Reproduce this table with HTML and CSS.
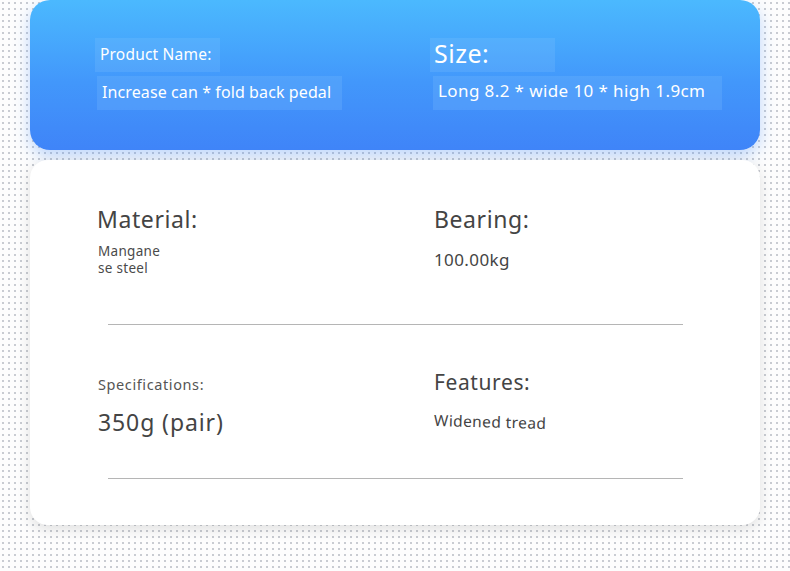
FILE: index.html
```html
<!DOCTYPE html>
<html>
<head>
<meta charset="utf-8">
<link rel="stylesheet" href="styles.css">
</head>
<body>
<div class="page">
  <section class="top-card">
    <div class="col">
      <div class="tag tag-label">Product Name:</div>
      <div class="tag tag-value">Increase can * fold back pedal</div>
    </div>
    <div class="col col-right">
      <div class="tag tag-size">Size:</div>
      <div class="tag tag-value tag-long">Long 8.2 * wide 10 * high 1.9cm</div>
    </div>
  </section>
  <section class="info-card">
    <div class="row">
      <div class="cell">
        <div class="h-big">Material:</div>
        <div class="v-small">Mangane<br>se steel</div>
      </div>
      <div class="cell">
        <div class="h-big">Bearing:</div>
        <div class="v-mid">100.00kg</div>
      </div>
    </div>
    <div class="rule"></div>
    <div class="row row-2">
      <div class="cell">
        <div class="h-small">Specifications:</div>
        <div class="v-big">350g (pair)</div>
      </div>
      <div class="cell">
        <div class="h-feat">Features:</div>
        <div class="v-tilt">Widened tread</div>
      </div>
    </div>
    <div class="rule rule-2"></div>
  </section>
</div>
</body>
</html>
```
FILE: styles.css
```css
html, body {
  margin: 0;
  padding: 0;
}
body {
  width: 790px;
  height: 571px;
  overflow: hidden;
  background-color: #fdfdfd;
  background-image: radial-gradient(circle, #c9ccd2 0.8px, transparent 1px);
  background-size: 6px 6px;
  font-family: "Noto Sans", "Open Sans", sans-serif;
}
.page {
  padding: 0 30px;
  display: flex;
  flex-direction: column;
  gap: 10px;
}
.top-card {
  height: 150px;
  box-sizing: border-box;
  border-radius: 20px;
  background: linear-gradient(180deg, #4bb9fe 0%, #4297fb 55%, #3f84f8 100%);
  box-shadow: 0 6px 16px rgba(70, 140, 250, 0.35);
  display: flex;
  padding: 38px 0 0 65px;
}
.col {
  width: 335px;
  flex-shrink: 0;
  display: flex;
  flex-direction: column;
  gap: 4px;
  align-items: flex-start;
}
.tag {
  background: rgba(140, 200, 255, 0.2);
  color: #fff;
  box-sizing: border-box;
  height: 34px;
  display: flex;
  align-items: center;
  white-space: nowrap;
}
.tag-label {
  width: 125px;
  padding-left: 5px;
  padding-bottom: 2px;
  font-size: 15.5px;
  letter-spacing: 0.2px;
}
.tag-value {
  margin-left: 2px;
  width: 245px;
  padding-left: 5px;
  padding-bottom: 2px;
  font-size: 16px;
  letter-spacing: 0.1px;
}
.tag-size {
  width: 125px;
  padding-left: 4px;
  padding-bottom: 4px;
  font-size: 25px;
  letter-spacing: 0.5px;
}
.tag-long {
  margin-left: 3px;
  width: 289px;
  padding-bottom: 6px;
  font-size: 17px;
  letter-spacing: 0.4px;
}
.info-card {
  height: 365px;
  box-sizing: border-box;
  border-radius: 18px;
  background: #fff;
  box-shadow: 0 4px 14px rgba(0, 0, 0, 0.12);
  padding: 44px 0 0 67px;
}
.row {
  display: flex;
  height: 120px;
}
.cell {
  width: 337px;
  flex-shrink: 0;
  color: #444;
}
.h-big {
  font-size: 23px;
  line-height: 30px;
  letter-spacing: 0.6px;
}
.v-small {
  font-size: 13.5px;
  line-height: 17px;
  margin-top: 9px;
  padding-left: 1px;
  color: #4a4a4a;
  letter-spacing: 0.3px;
}
.v-mid {
  font-size: 17px;
  margin-top: 14px;
  color: #444;
  letter-spacing: 0.4px;
}
.rule {
  margin-left: 11px;
  width: 575px;
  height: 1px;
  background: #b5b5b5;
}
.row-2 {
  padding-top: 45px;
  height: 108px;
  box-sizing: content-box;
}
.h-small {
  font-size: 14.5px;
  line-height: 20px;
  padding-left: 1px;
  margin-top: 4px;
  color: #555;
  letter-spacing: 0.6px;
}
.v-big {
  font-size: 23px;
  line-height: 30px;
  margin-top: 13px;
  padding-left: 1px;
  letter-spacing: 0.9px;
}
.h-feat {
  font-size: 21px;
  line-height: 28px;
  letter-spacing: 0.6px;
  margin-top: -2px;
}
.v-tilt {
  font-size: 15.5px;
  margin-top: 13px;
  letter-spacing: 0.4px;
  transform: rotate(1.5deg);
  transform-origin: left center;
}
.rule-2 {
  margin-top: 0;
}
```
